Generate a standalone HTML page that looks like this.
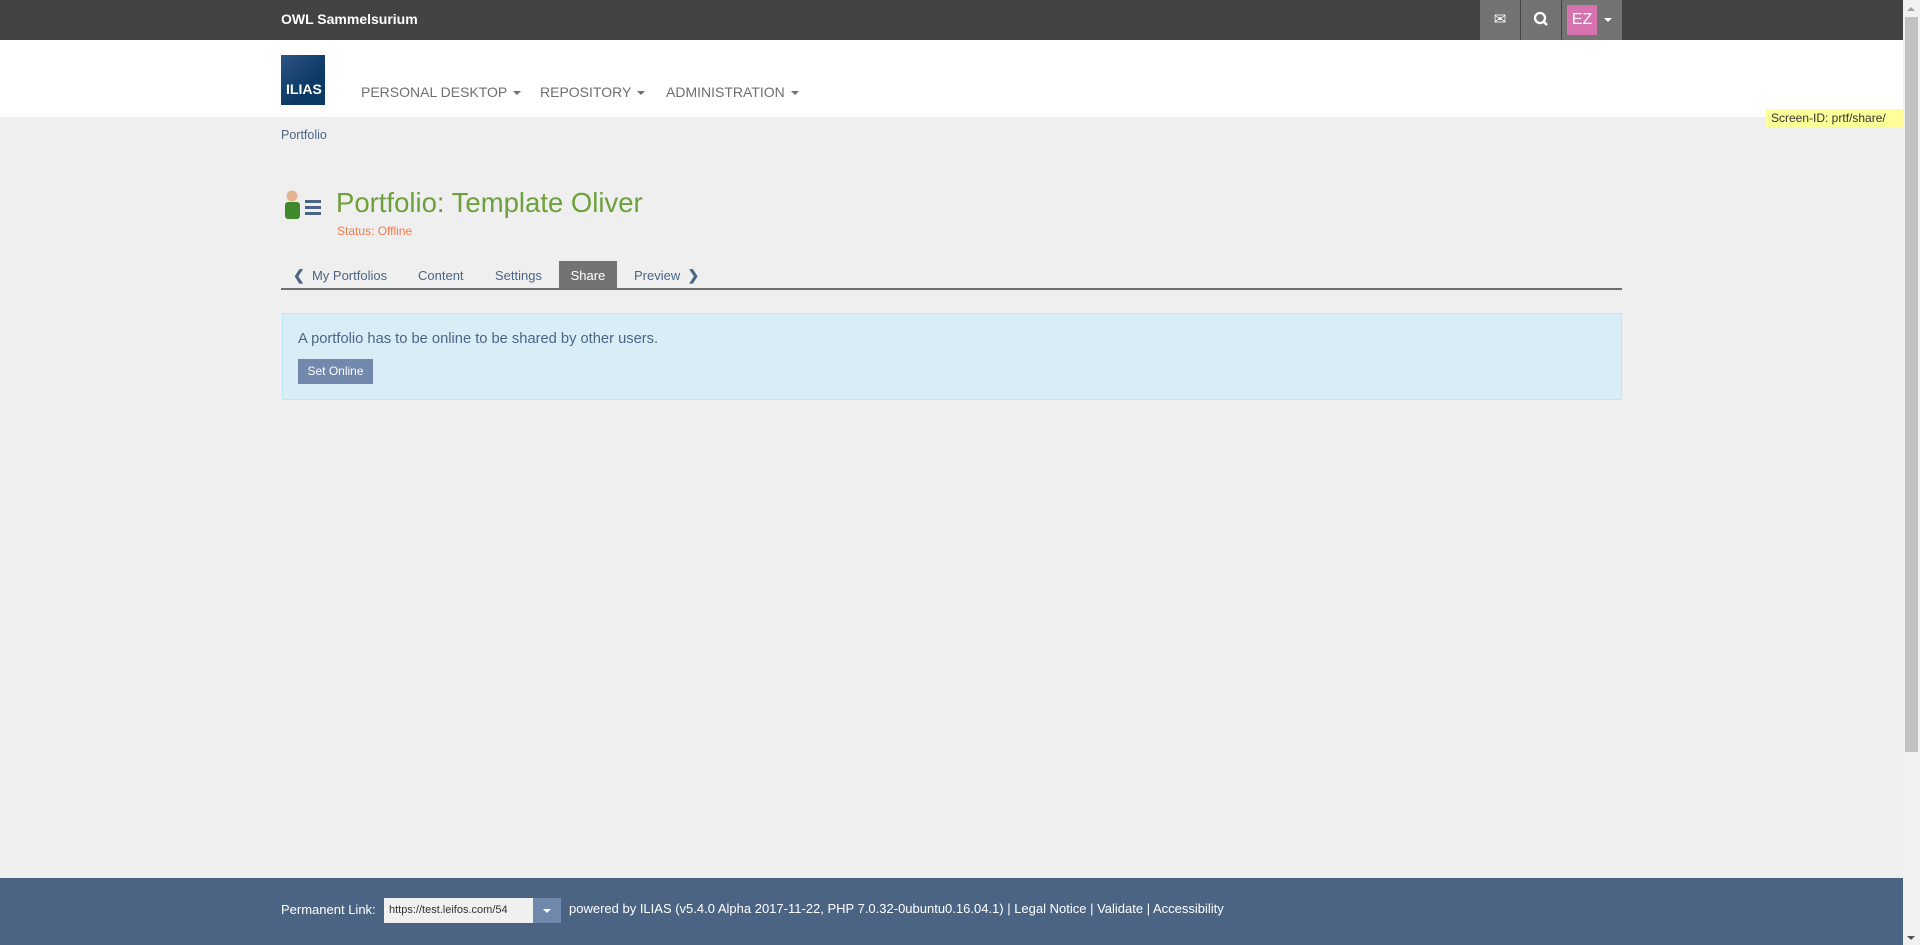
<!DOCTYPE html>
<html><head><meta charset="utf-8"><style>
*{box-sizing:border-box;margin:0;padding:0}
body{width:1920px;height:945px;overflow:hidden;background:#f0f0f0;font-family:"Liberation Sans",sans-serif;position:relative}
.a{position:absolute}
#top{left:0;top:0;width:1903px;height:40px;background:#434343}
#hdr{left:0;top:40px;width:1903px;height:77px;background:#fff}
#main{left:0;top:117px;width:1903px;height:761px;background:#efefef}
#foot{left:0;top:878px;width:1903px;height:67px;background:#4b6484}
#sb{left:1903px;top:0;width:17px;height:945px;background:#f1f1f1}
.nav{font-size:14px;color:#6f6f6f;top:84px}
.caret{display:inline-block;border-left:4px solid transparent;border-right:4px solid transparent;border-top:4px solid #6f6f6f;vertical-align:middle;margin-left:6px}
.tab{top:261px;height:27px;font-size:13px;color:#4c6586;line-height:29px}
</style></head><body>
<div id="top" class="a"></div>
<div class="a" style="left:281px;top:11px;color:#fff;font-weight:bold;font-size:14px">OWL Sammelsurium</div>
<div class="a" style="left:1480px;top:0;width:40px;height:40px;background:#737373;color:#fff;text-align:center;line-height:40px;font-size:15px">✉</div>
<div class="a" style="left:1521px;top:0;width:40px;height:40px;background:#737373"><svg width="40" height="40"><circle cx="19" cy="18" r="5" stroke="#fff" stroke-width="2.3" fill="none"/><line x1="22.5" y1="21.5" x2="26" y2="25" stroke="#fff" stroke-width="2.6"/></svg></div>
<div class="a" style="left:1562px;top:0;width:60px;height:40px;background:#737373"></div>
<div class="a" style="left:1567px;top:5px;width:30px;height:30px;background:#d672ad;color:#fff;font-size:16px;text-align:center;line-height:30px">EZ</div>
<div class="a" style="left:1604px;top:18px;border-left:4px solid transparent;border-right:4px solid transparent;border-top:4px solid #fff"></div>
<div id="hdr" class="a"></div>
<div class="a" style="left:281px;top:55px;width:44px;height:50px;background:linear-gradient(135deg,#2d5384,#0c3a66 60%);color:#fff;font-weight:bold;font-size:14px;padding:26px 0 0 5px">ILIAS</div>
<div class="a nav" style="left:361px">PERSONAL DESKTOP<span class="caret"></span></div>
<div class="a nav" style="left:540px">REPOSITORY<span class="caret"></span></div>
<div class="a nav" style="left:666px">ADMINISTRATION<span class="caret"></span></div>
<div id="main" class="a"></div>
<div class="a" style="left:1766px;top:109px;width:137px;height:18px;background:#ffff99;font-size:12px;color:#333;line-height:18px;padding-left:5px">Screen-ID: prtf/share/</div>
<div class="a" style="left:281px;top:128px;font-size:12.5px;color:#4c6586">Portfolio</div>
<svg class="a" style="left:282px;top:190px" width="40" height="30"><circle cx="10" cy="6" r="5.5" fill="#e4b48f"/><rect x="3" y="12" width="15" height="17" rx="3" fill="#3f8b2b"/><rect x="23" y="10" width="16" height="3" fill="#4c6586"/><rect x="23" y="16" width="16" height="3" fill="#4c6586"/><rect x="23" y="22" width="16" height="3" fill="#4c6586"/></svg>
<div class="a" style="left:336px;top:187px;font-size:27.5px;color:#6ea03c">Portfolio: Template Oliver</div>
<div class="a" style="left:337px;top:224px;font-size:12px;color:#f47a45">Status: Offline</div>
<div class="a" style="left:281px;top:288px;width:1341px;height:2px;background:#6f6f6f"></div>
<div class="a tab" style="left:293px"><b style="font-size:14px">❮</b>&nbsp; My Portfolios</div>
<div class="a tab" style="left:418px">Content</div>
<div class="a tab" style="left:495px">Settings</div>
<div class="a tab" style="left:559px;width:58px;background:#737373;color:#fff;text-align:center">Share</div>
<div class="a tab" style="left:634px">Preview &nbsp;<b style="font-size:14px">❯</b></div>
<div class="a" style="left:282px;top:313px;width:1340px;height:87px;background:#d9edf7;border:1px solid #bce8f1"></div>
<div class="a" style="left:298px;top:331px;font-size:14.7px;color:#4c6586">A portfolio has to be online to be shared by other users.</div>
<div class="a" style="left:298px;top:359px;width:75px;height:25px;background:#7288ac;color:#fff;font-size:12px;text-align:center;line-height:25px">Set Online</div>
<div id="foot" class="a"></div>
<div class="a" style="left:281px;top:902px;font-size:13px;color:#fff">Permanent Link:</div>
<div class="a" style="left:384px;top:898px;width:149px;height:25px;background:#f0f0f0;font-size:11px;color:#333;line-height:25px;padding-left:5px;overflow:hidden;white-space:nowrap">https://test.leifos.com/54</div>
<div class="a" style="left:533px;top:898px;width:28px;height:25px;background:#6f88ab"><div class="a" style="left:10px;top:11px;border-left:4px solid transparent;border-right:4px solid transparent;border-top:4px solid #fff"></div></div>
<div class="a" style="left:569px;top:901px;font-size:13px;color:#fff;white-space:nowrap">powered by ILIAS (v5.4.0 Alpha 2017-11-22, PHP 7.0.32-0ubuntu0.16.04.1) | Legal Notice | Validate | Accessibility</div>
<div id="sb" class="a"></div>
<div class="a" style="left:1905px;top:17px;width:13px;height:735px;background:#c1c1c1"></div>
<div class="a" style="left:1907px;top:7px;border-left:4px solid transparent;border-right:4px solid transparent;border-bottom:4px solid #a3a3a3"></div>
<div class="a" style="left:1907px;top:936px;border-left:4px solid transparent;border-right:4px solid transparent;border-top:4px solid #505050"></div>
</body></html>
